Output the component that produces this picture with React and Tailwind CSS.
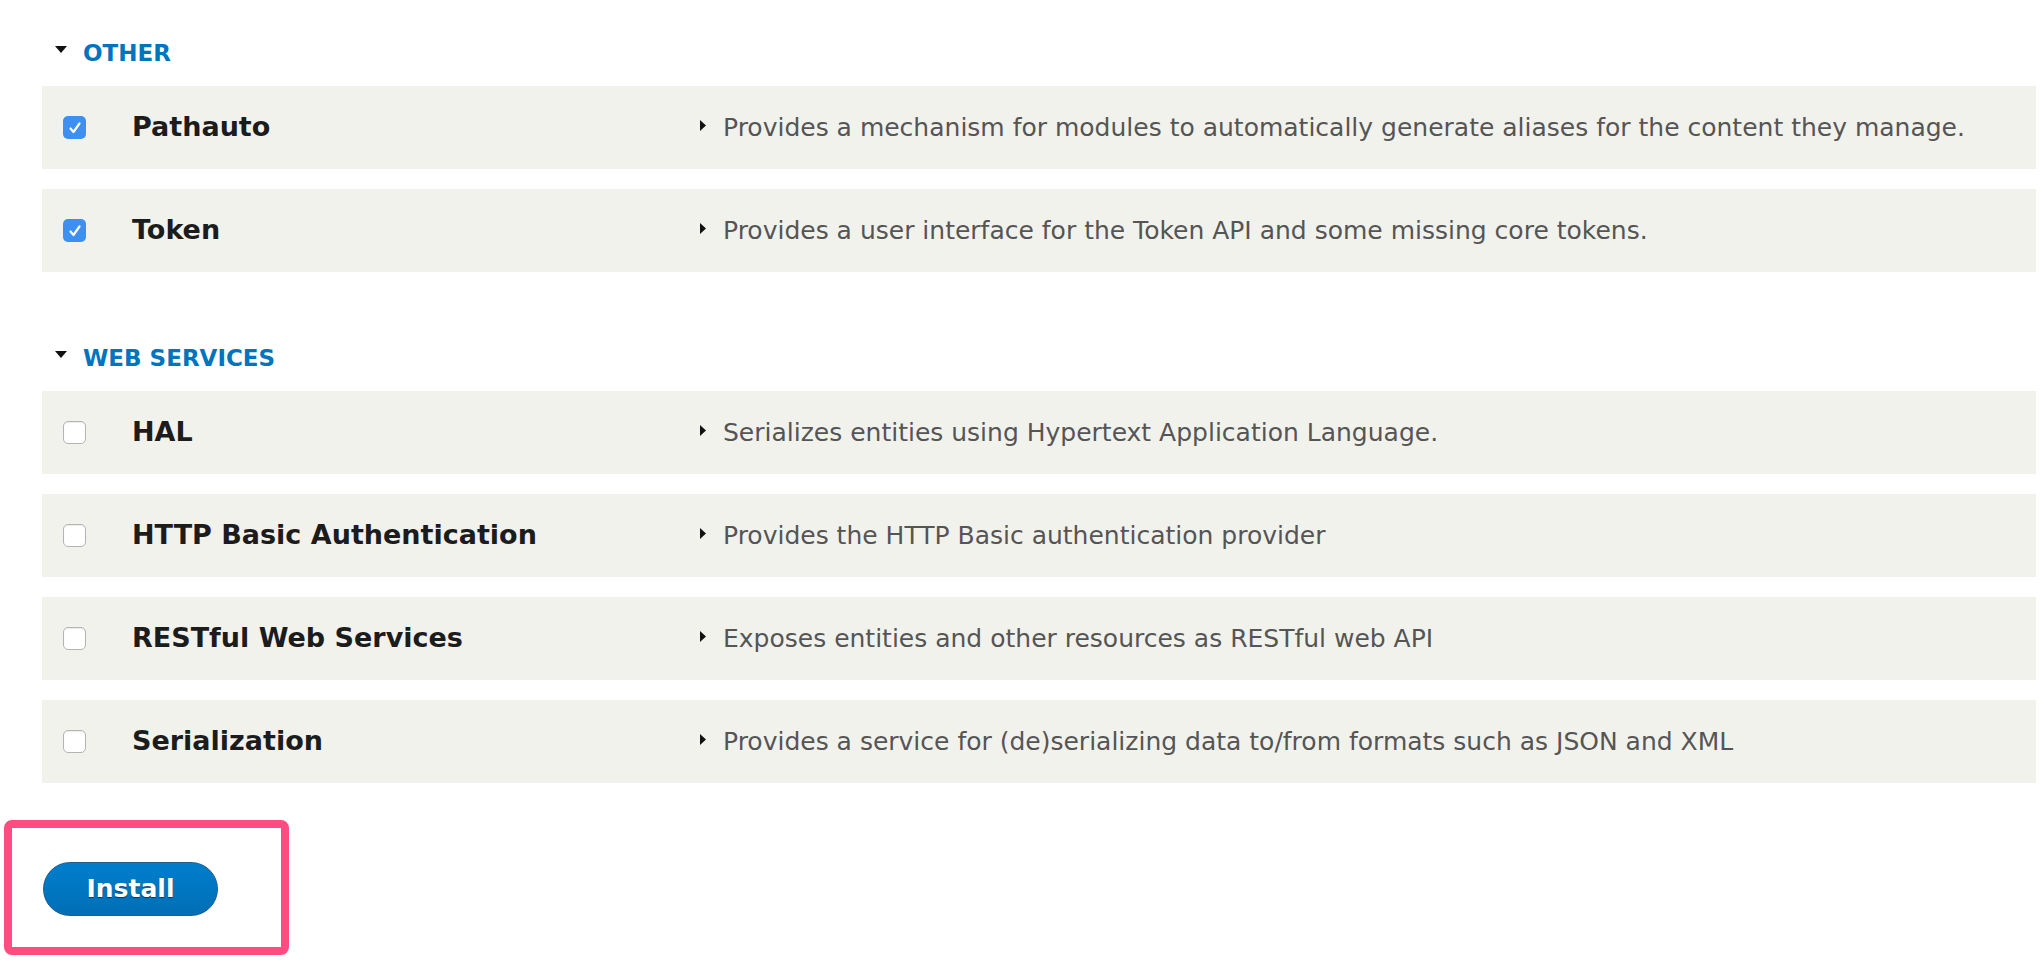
const sections = [
  {
    title: "OTHER",
    modules: [
      {
        name: "Pathauto",
        checked: true,
        desc: "Provides a mechanism for modules to automatically generate aliases for the content they manage.",
      },
      { name: "Token", checked: true, desc: "Provides a user interface for the Token API and some missing core tokens." },
    ],
  },
  {
    title: "WEB SERVICES",
    modules: [
      { name: "HAL", checked: false, desc: "Serializes entities using Hypertext Application Language." },
      { name: "HTTP Basic Authentication", checked: false, desc: "Provides the HTTP Basic authentication provider" },
      { name: "RESTful Web Services", checked: false, desc: "Exposes entities and other resources as RESTful web API" },
      {
        name: "Serialization",
        checked: false,
        desc: "Provides a service for (de)serializing data to/from formats such as JSON and XML",
      },
    ],
  },
];

function Checkbox({ checked }) {
  if (checked) {
    return (
      <div className="flex h-[23px] w-[23px] items-center justify-center rounded-[5px] bg-[#3d8ff2]">
        <svg width="14" height="14" viewBox="0 0 14 14" fill="none">
          <path d="M2.5 7.5 L5.5 11 L11.5 2.5" stroke="white" strokeWidth="2.2" strokeLinecap="round" strokeLinejoin="round" />
        </svg>
      </div>
    );
  }
  return (
    <div className="h-[23px] w-[23px] rounded-[5px] border border-[#b4b4b4] bg-white shadow-[inset_0_1px_1px_rgba(0,0,0,0.08)]" />
  );
}

function ModuleRow({ mod }) {
  return (
    <div className="flex h-[83px] items-center bg-[#f2f2ed]">
      <div className="w-[90px] shrink-0 pl-[21px]">
        <Checkbox checked={mod.checked} />
      </div>
      <div className="w-[568px] shrink-0 text-[27px] font-bold text-[#1c1c1c]">{mod.name}</div>
      <div className="flex items-center gap-[17px] text-[25px] text-[#555555]">
        <svg width="6" height="11" viewBox="0 0 6 11" className="-mt-[5px] shrink-0">
          <path d="M0 0 L6 5.5 L0 11 Z" fill="#111" />
        </svg>
        <span>{mod.desc}</span>
      </div>
    </div>
  );
}

function Section({ section, first }) {
  return (
    <div className={first ? "" : "mt-[71px]"}>
      <div className="mb-[18px] flex items-start">
        <svg width="12" height="7" viewBox="0 0 12 7" className="ml-[13px] mt-[8px] shrink-0">
          <path d="M0 0 L12 0 L6 7 Z" fill="#111" />
        </svg>
        <span className="ml-[16px] text-[23px] font-bold leading-[30px] text-[#0074bd]">{section.title}</span>
      </div>
      <div className="flex flex-col gap-[20px]">
        {section.modules.map((m) => (
          <ModuleRow key={m.name} mod={m} />
        ))}
      </div>
    </div>
  );
}

export default function App() {
  return (
    <div className="min-h-screen bg-white pt-[38px] font-['DejaVu_Sans',sans-serif]">
      <div className="ml-[42px] mr-[8px]">
        {sections.map((s, i) => (
          <Section key={s.title} section={s} first={i === 0} />
        ))}
      </div>
      <div className="ml-[4px] mt-[37px] h-[135px] w-[285px] rounded-[8px] border-[8px] border-[#ff4d82] pl-[31px] pt-[34px]">
        <button
          type="button"
          className="h-[54px] w-[175px] rounded-full border-[1.5px] border-[#1d5c92] bg-gradient-to-b from-[#007ecb] to-[#006fb6] text-[25px] font-bold text-white [text-shadow:0_1px_1px_rgba(0,0,0,0.5)]"
        >
          Install
        </button>
      </div>
    </div>
  );
}
